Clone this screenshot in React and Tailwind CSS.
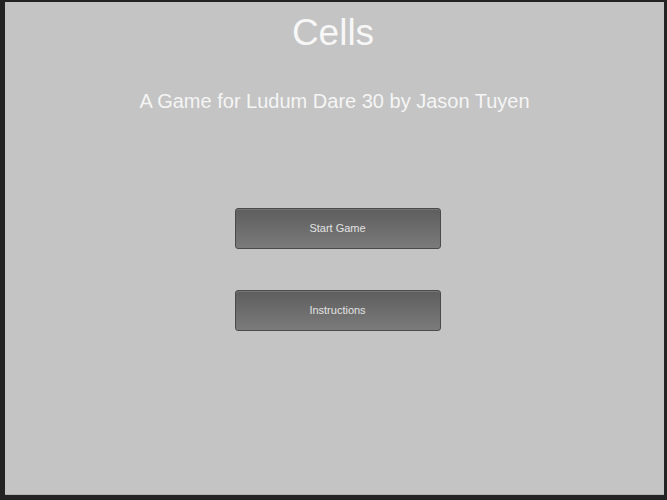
import React from "react";

const MenuButton = ({ label }) => (
  <button
    type="button"
    className="w-[206px] h-[41px] rounded-[3px] border border-[#4a4a4a] bg-gradient-to-b from-[#5e5e5e] to-[#7b7b7b] shadow-[inset_0_1px_0_rgba(255,255,255,0.15)] text-[11px] text-[#e2e2e2] flex items-center justify-center"
  >
    {label}
  </button>
);

export default function App() {
  return (
    <div className="w-[667px] h-[500px] bg-[#232323] pt-[2px] pl-[5px] pr-[3px] pb-[5px] font-['Liberation_Sans',Arial,sans-serif]">
      <div className="h-full bg-[#c4c4c4] border-b border-[#b0b0b0] flex flex-col items-center">
        <h1 className="mt-[12px] -ml-[3px] text-[37px] leading-none text-[#f7f7f7]">Cells</h1>
        <p className="mt-[40px] text-[20px] leading-none text-[#f5f5f5]">
          A Game for Ludum Dare 30 by Jason Tuyen
        </p>
        <div className="mt-[97px] ml-[6px] flex flex-col gap-[41px]">
          <MenuButton label="Start Game" />
          <MenuButton label="Instructions" />
        </div>
      </div>
    </div>
  );
}
